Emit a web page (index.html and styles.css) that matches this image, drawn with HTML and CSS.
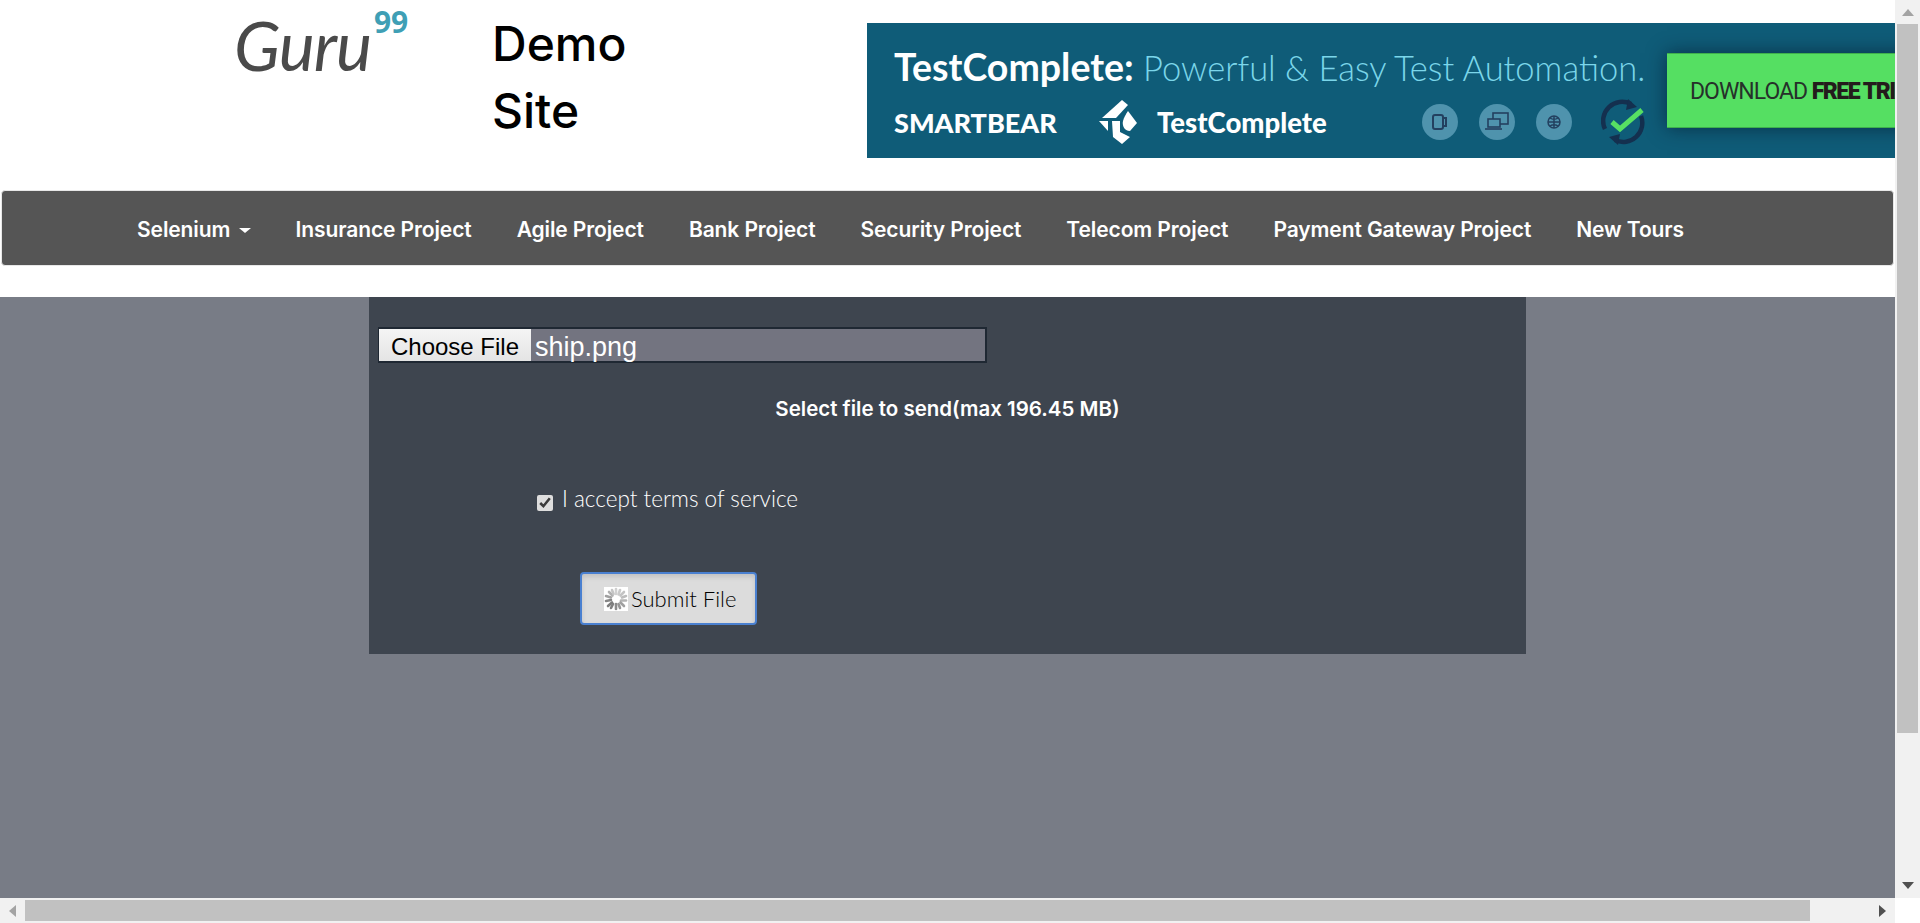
FILE: index.html
```html
<!DOCTYPE html>
<html lang="en">
<head>
    <meta charset="UTF-8">
    <meta name="viewport" content="width=device-width, initial-scale=1.0">
    <title>File Upload Demo</title>
    <link rel="stylesheet" href="styles.css">
</head>
<body>
<div class="window">
    <div class="page">
        <header class="top">
            <div class="logo">
                <span class="logo-word">Guru</span>
                <span class="logo-num">99</span>
            </div>
            <h1 class="site-title">Demo<br>Site</h1>
            <div class="banner">
                <div class="banner-left">
                    <div class="headline"><b>TestComplete:</b> Powerful &amp; Easy Test Automation.</div>
                    <div class="banner-row">
                        <span class="smartbear">SMARTBEAR</span>
                        <svg class="tc-mark" width="40" height="46" viewBox="0 0 40 46">
                            <path d="M4 19 L24 1 L30 6 L18 19 Z" fill="#fff"/>
                            <path d="M1 22 L10 22 L10 32 Z" fill="#fff"/>
                            <path d="M14 22 L22 22 L22 33 L32 38 L24 45 L15 38 Z" fill="#fff"/>
                            <path d="M30 12 L39 24 L32 32 C26 32 24 26 25 22 C26 18 28 15 30 12 Z" fill="#fff"/>
                        </svg>
                        <span class="tc-name">TestComplete</span>
                        <span class="round-icons">
                            <span class="round-icon">
                                <svg width="20" height="20" viewBox="0 0 20 20" fill="none" stroke="#23405f" stroke-width="2"><rect x="3" y="3" width="10" height="14" rx="2"/><path d="M13 6h3v8h-3"/></svg>
                            </span>
                            <span class="round-icon">
                                <svg width="28" height="22" viewBox="0 0 28 22" fill="none" stroke="#23405f" stroke-width="1.6"><rect x="10" y="2" width="15" height="11"/><rect x="5" y="8" width="12" height="8" fill="#4f93ad"/><path d="M2 18h17"/></svg>
                            </span>
                            <span class="round-icon">
                                <svg width="16" height="16" viewBox="0 0 16 16" fill="none" stroke="#23405f" stroke-width="1.5"><circle cx="8" cy="8" r="6"/><path d="M2 8h12M8 2v12M4 4c3 2 5 2 8 0M4 12c3-2 5-2 8 0"/></svg>
                            </span>
                        </span>
                        <svg class="sync-mark" width="44" height="46" viewBox="0 0 44 46" fill="none">
                            <path d="M4 30 A19 19 0 0 1 30 5" stroke="#14304f" stroke-width="4.5"/>
                            <path d="M27 0 L36 8 L25 11 Z" fill="#14304f"/>
                            <path d="M40 17 A19 19 0 0 1 14 41" stroke="#14304f" stroke-width="4.5"/>
                            <path d="M17 46 L8 38 L19 35 Z" fill="#14304f"/>
                            <path d="M11 23 L19 30 L41 11" stroke="#57e063" stroke-width="5"/>
                        </svg>
                    </div>
                </div>
                <div class="banner-btn">DOWNLOAD <b>FREE TRIAL</b></div>
            </div>
        </header>

        <nav class="navbar">
            <a class="nav-link" href="#">Selenium <span class="caret"></span></a>
            <a class="nav-link" href="#">Insurance Project</a>
            <a class="nav-link" href="#">Agile Project</a>
            <a class="nav-link" href="#">Bank Project</a>
            <a class="nav-link" href="#">Security Project</a>
            <a class="nav-link" href="#">Telecom Project</a>
            <a class="nav-link" href="#">Payment Gateway Project</a>
            <a class="nav-link" href="#">New Tours</a>
        </nav>

        <main class="content">
            <form class="upload-panel">
                <div class="file-field">
                    <button type="button" class="file-btn">Choose File</button>
                    <span class="file-name">ship.png</span>
                </div>
                <p class="file-hint">Select file to send(max 196.45 MB)</p>
                <label class="terms">
                    <input type="checkbox" class="terms-box" checked>
                    <span>I accept terms of service</span>
                </label>
                <button type="button" class="submit-btn">
                    <svg class="spinner" width="24" height="24" viewBox="0 0 24 24">
                        <rect width="24" height="24" fill="#fff"/>
                        <g stroke-width="2.6" stroke-linecap="round">
                            <path d="M12 2v5" stroke="#d0d0d0"/>
                            <path d="M16 3l-1.5 4.5" stroke="#cacaca"/>
                            <path d="M20 5l-3.5 3.5" stroke="#c4c4c4"/>
                            <path d="M22 9l-4 1.5" stroke="#bcbcbc"/>
                            <path d="M22 13.500h-5" stroke="#b4b4b4"/>
                            <path d="M20 19l-3.500-3.500" stroke="#a0a0a0"/>
                            <path d="M16 21l-1.500-4" stroke="#969696"/>
                            <path d="M12 22v-5" stroke="#8c8c8c"/>
                            <path d="M7 21l2-4" stroke="#808080"/>
                            <path d="M4 19l4-3.500" stroke="#7c7c7c"/>
                            <path d="M2 14l5-1" stroke="#858585"/>
                            <path d="M2 9l5 1.500" stroke="#a0a0a0"/>
                            <path d="M5 5l3.500 3.500" stroke="#b0b0b0"/>
                            <path d="M8 3l1.500 4" stroke="#c4c4c4"/>
                        </g>
                    </svg>
                    Submit File
                </button>
            </form>
        </main>
    </div>

    <div class="vbar">
        <span class="arrow arrow-up"></span>
        <div class="vbar-track"><div class="vbar-thumb"></div></div>
        <span class="arrow arrow-down"></span>
    </div>
    <div class="hbar">
        <span class="arrow arrow-left"></span>
        <div class="hbar-track"><div class="hbar-thumb"></div></div>
        <span class="arrow arrow-right"></span>
    </div>
    <div class="corner"></div>
</div>
</body>
</html>
```

FILE: styles.css
```css
* {
    box-sizing: border-box;
}

body {
    margin: 0;
    font-family: 'Lato', sans-serif;
    background: #fff;
}

/* window with hand drawn scrollbars */
.window {
    display: grid;
    grid-template-columns: 1895px 25px;
    grid-template-rows: 898px 25px;
    height: 923px;
    overflow: hidden;
}

.page {
    display: flex;
    flex-direction: column;
    overflow: hidden;
    min-width: 0;
}

.top {
    display: flex;
    height: 190px;
    flex: none;
}

.logo {
    display: flex;
    width: 492px;
    padding: 10px 0 0 234px;
    color: #4a4a4a;
    flex: none;
}

.logo-word {
    font-family: 'Lato', sans-serif;
    font-style: italic;
    font-weight: 400;
    font-size: 68px;
    line-height: 70px;
    letter-spacing: -1px;
    height: 70px;
}

.logo-num {
    font-family: 'Open Sans', sans-serif;
    font-weight: 700;
    font-size: 30px;
    line-height: 30px;
    color: #3f9fb5;
    margin: -3px 0 0 3px;
}

.site-title {
    width: 375px;
    margin: 10px 0 0;
    flex: none;
    font-family: 'Inter', sans-serif;
    font-size: 48px;
    font-weight: 500;
    line-height: 67px;
    color: #000;
}

.banner {
    display: flex;
    width: 1092px;
    height: 135px;
    margin-top: 23px;
    flex: none;
    background: #0f5c78;
}

.banner-left {
    width: 800px;
    padding: 24px 0 0 27px;
    flex: none;
}

.headline {
    font-family: 'Lato', sans-serif;
    font-weight: 300;
    font-size: 34.5px;
    line-height: 40px;
    color: #7bd6ea;
    white-space: nowrap;
}

.headline b {
    color: #fff;
    font-weight: 700;
    font-size: 37.5px;
}

.banner-row {
    display: flex;
    align-items: center;
    height: 46px;
    margin-top: 11px;
}

.smartbear {
    font-family: 'Lato', sans-serif;
    font-weight: 900;
    font-size: 27px;
    color: #fff;
    width: 204px;
    flex: none;
}

.tc-mark {
    flex: none;
}

.tc-name {
    font-family: 'Lato', sans-serif;
    font-weight: 900;
    font-size: 27.500px;
    color: #fff;
    margin-left: 19px;
    width: 265px;
    flex: none;
}

.round-icons {
    display: flex;
    gap: 21px;
    flex: none;
    width: 183px;
}

.round-icon {
    display: flex;
    align-items: center;
    justify-content: center;
    width: 36px;
    height: 36px;
    border-radius: 50%;
    background: #4f93ad;
}

.sync-mark {
    flex: none;
    margin-left: -4px;
}

.banner-btn {
    width: 292px;
    height: 75px;
    margin-top: 30px;
    padding-left: 23px;
    flex: none;
    background: #55df62;
    border-top: 1px solid #3fb04c;
    border-bottom: 1px solid #3fb04c;
    box-shadow: 0 0 18px rgba(5, 30, 50, 0.7);
    font-family: 'Roboto', sans-serif;
    font-size: 23px;
    line-height: 75px;
    letter-spacing: -1px;
    color: #26302a;
    white-space: nowrap;
}

.banner-btn b {
    font-weight: 900;
    letter-spacing: -1.5px;
    color: #241c1c;
}

.navbar {
    display: flex;
    align-items: center;
    gap: 45px;
    height: 76px;
    margin: 0 1px;
    padding: 2px 0 0 135px;
    flex: none;
    background: #555;
    border: 1px solid #e7e7e7;
    border-radius: 4px;
}

.nav-link {
    font-family: 'Inter', sans-serif;
    font-size: 21px;
    font-weight: 600;
    letter-spacing: -0.1px;
    color: #fff;
    text-decoration: none;
    white-space: nowrap;
}

.caret {
    display: inline-block;
    margin-left: 3px;
    vertical-align: middle;
    border-top: 5px solid #fff;
    border-left: 6px solid transparent;
    border-right: 6px solid transparent;
}

.content {
    flex: 1;
    margin-top: 31px;
    background: #787c86;
}

.upload-panel {
    display: flex;
    flex-direction: column;
    align-items: flex-start;
    width: 1157px;
    height: 357px;
    margin: 0 auto;
    padding: 30px 9px 0;
    background: #3e454f;
}

.file-field {
    display: flex;
    width: 609px;
    height: 36px;
    background: #737480;
    border: 2px solid #1f2833;
    border-left-width: 1px;
}

.file-btn {
    width: 152px;
    height: 32px;
    padding: 3px 0 0;
    background: linear-gradient(#f4f4f4, #e4e4e4);
    border: 0;
    font-family: 'Liberation Sans', sans-serif;
    font-size: 24px;
    color: #000;
}

.file-name {
    margin-left: 4px;
    padding-top: 2px;
    font-family: 'Liberation Sans', sans-serif;
    font-size: 27px;
    line-height: 32px;
    color: #fff;
}

.file-hint {
    align-self: stretch;
    margin: 32px 0 0;
    text-align: center;
    font-family: 'Inter', sans-serif;
    font-weight: 600;
    font-size: 20.500px;
    line-height: 28px;
    color: #fff;
}

.terms {
    display: flex;
    align-items: center;
    gap: 9px;
    margin: 62px 0 0 159px;
    font-size: 22.500px;
    font-weight: 300;
    line-height: 28px;
    color: #fff;
}

.terms-box {
    width: 16px;
    height: 16px;
    margin: 7px 0 0;
    accent-color: #dedede;
}

.submit-btn {
    display: flex;
    align-items: center;
    gap: 3px;
    width: 177px;
    height: 53px;
    margin: 59px 0 0 202px;
    padding: 0 0 0 22px;
    background: #dcdcdc;
    border: 2px solid #4a80d0;
    border-radius: 4px;
    box-shadow: inset 0 3px 5px rgba(0, 0, 0, 0.12);
    font-family: 'Lato', sans-serif;
    font-size: 22px;
    font-weight: 300;
    color: #000;
}

.spinner {
    flex: none;
}

/* scrollbars */
.vbar,
.hbar {
    display: flex;
    background: #f1f1f1;
}

.vbar {
    flex-direction: column;
    align-items: center;
}

.vbar-track {
    flex: 1;
    width: 100%;
    padding: 0 2px;
}

.vbar-thumb {
    height: 709px;
    background: #c1c1c1;
}

.hbar {
    align-items: center;
}

.hbar-track {
    flex: 1;
    height: 100%;
    padding: 2px 0;
}

.hbar-thumb {
    width: 1785px;
    height: 21px;
    background: #c1c1c1;
}

.corner {
    background: #fff;
}

.arrow {
    display: flex;
    flex: none;
    width: 0;
    height: 0;
    border-style: solid;
    border-color: transparent;
}

.arrow-up {
    margin: 9px 0 8px;
    border-width: 0 6px 7px;
    border-bottom-color: #a3a3a3;
}

.arrow-down {
    margin: 8px 0 9px;
    border-width: 7px 6px 0;
    border-top-color: #505050;
}

.arrow-left {
    margin: 0 9px;
    border-width: 6px 7px 6px 0;
    border-right-color: #a3a3a3;
}

.arrow-right {
    margin: 0 9px;
    border-width: 6px 0 6px 7px;
    border-left-color: #505050;
}
```
